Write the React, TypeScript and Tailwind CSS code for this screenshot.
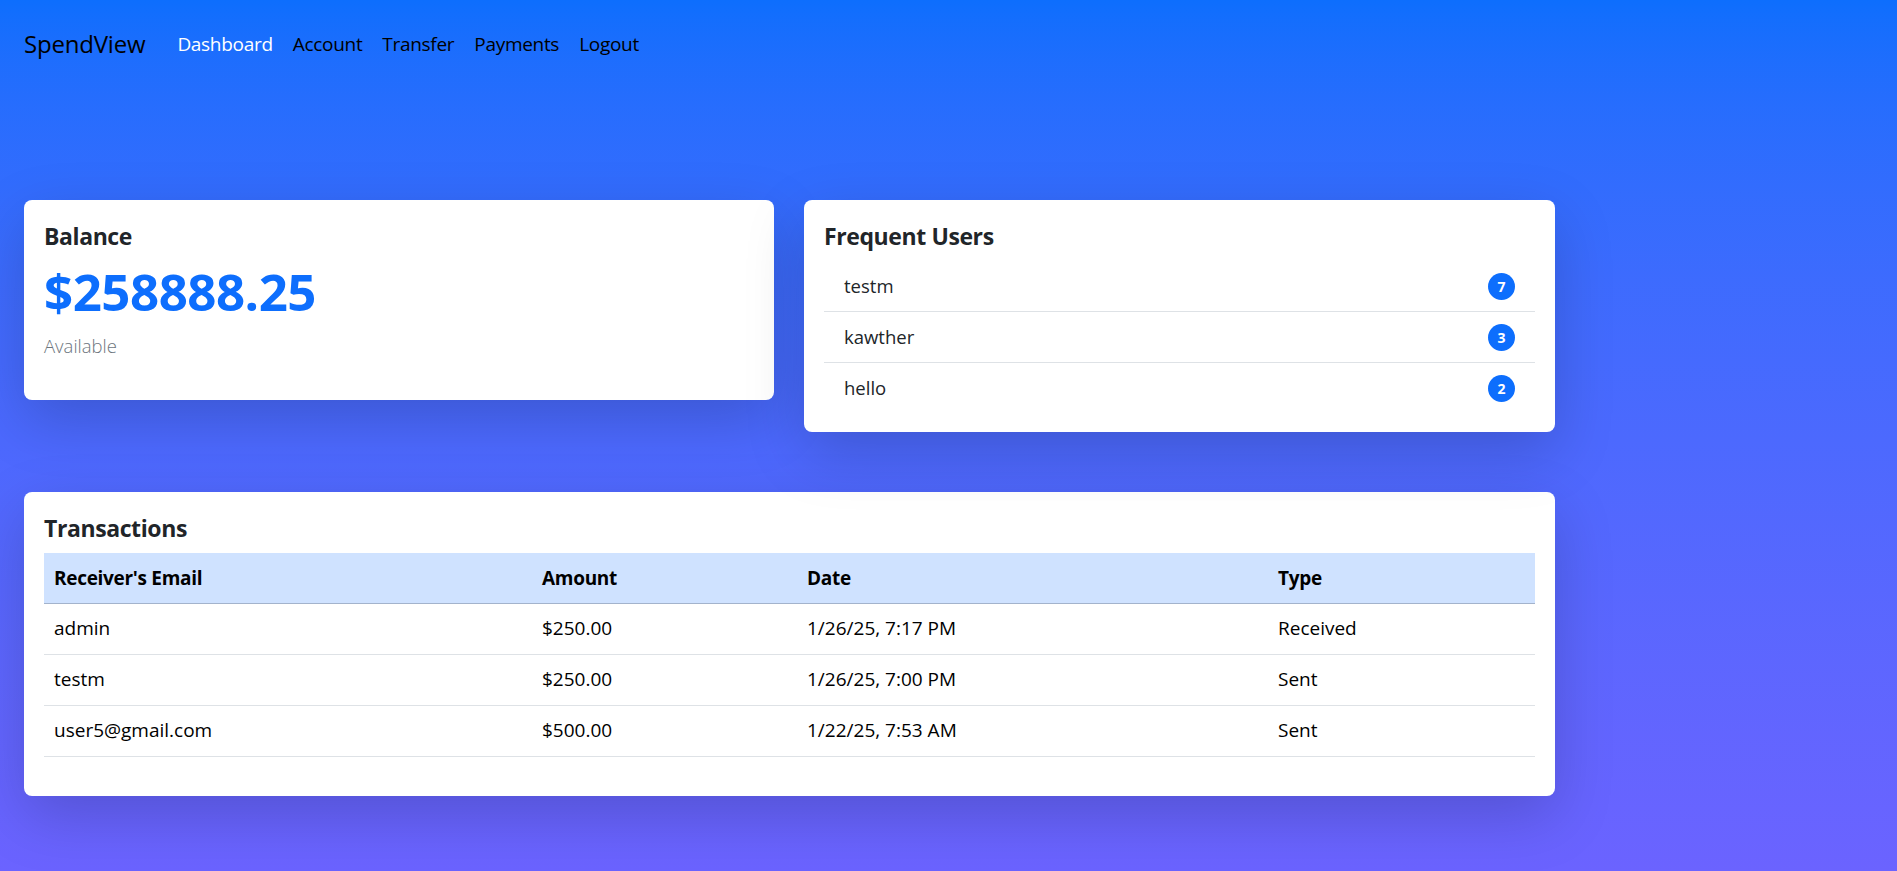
import React from "react";

const users = [
  { name: "testm", count: 7 },
  { name: "kawther", count: 3 },
  { name: "hello", count: 2 },
];

const txs = [
  { email: "admin", amount: "$250.00", date: "1/26/25, 7:17 PM", type: "Received" },
  { email: "testm", amount: "$250.00", date: "1/26/25, 7:00 PM", type: "Sent" },
  { email: "user5@gmail.com", amount: "$500.00", date: "1/22/25, 7:53 AM", type: "Sent" },
];

export default function App() {
  return (
    <div
      className="min-h-screen w-full bg-gradient-to-b from-[#0d6efd] to-[#6b63ff] text-[#212529]"
      style={{ fontFamily: '"Open Sans", "Noto Sans", sans-serif' }}
    >
      <nav className="flex h-[88px] items-center pl-[24px]">
        <span className="mr-[22px] text-[24px] leading-[30px] text-black tracking-[-0.2px]">SpendView</span>
        <ul className="flex items-center text-[19px] leading-[30px] tracking-[-0.3px]">
          <li className="px-[10px] text-white">Dashboard</li>
          <li className="px-[10px] text-black">Account</li>
          <li className="px-[10px] text-black">Transfer</li>
          <li className="px-[10px] text-black">Payments</li>
          <li className="px-[10px] text-black">Logout</li>
        </ul>
      </nav>

      <main className="px-[24px] pt-[112px] pb-[60px]">
        <div className="grid w-[1531px] grid-cols-[750px_751px] items-start gap-x-[30px]">
          <section className="rounded-[8px] bg-white px-[20px] pt-[21px] pb-[20px] shadow-[0_20px_60px_rgba(0,0,0,0.175)]">
            <h5 className="mb-[10px] text-[23px] font-bold leading-[30px] tracking-[-0.4px]">Balance</h5>
            <div className="mb-[10px] text-[51px] font-bold leading-[60px] tracking-[-0.5px] text-[#0d6efd]">$258888.25</div>
            <p className="mb-[19px] text-[18.5px] font-light leading-[30px] text-[#6c757d]">Available</p>
          </section>

          <section className="rounded-[8px] bg-white px-[20px] pt-[21px] pb-[19px] shadow-[0_20px_60px_rgba(0,0,0,0.175)]">
            <h5 className="mb-[10px] text-[23px] font-bold leading-[30px] tracking-[-0.4px]">Frequent Users</h5>
            <ul>
              {users.map((u, i) => (
                <li
                  key={u.name}
                  className={
                    "flex h-[50px] items-center justify-between px-[20px] text-[18.5px] " +
                    (i < users.length - 1 ? "border-b border-[#dee2e6] box-content" : "")
                  }
                >
                  <span>{u.name}</span>
                  <span className="flex h-[27px] min-w-[27px] items-center justify-center rounded-full bg-[#0d6efd] px-[8px] text-[14px] font-bold text-white">
                    {u.count}
                  </span>
                </li>
              ))}
            </ul>
          </section>
        </div>

        <section className="mt-[60px] w-[1531px] rounded-[8px] bg-white px-[20px] pt-[21px] pb-[20px] shadow-[0_20px_60px_rgba(0,0,0,0.175)]">
          <h5 className="mb-[10px] text-[23px] font-bold leading-[30px] tracking-[-0.4px]">Transactions</h5>
          <table className="mb-[19px] w-full border-collapse text-left text-[19px] text-black">
            <thead>
              <tr className="h-[50px] border-b border-[#a3b3cc] bg-[#cfe2ff]">
                <th className="w-[488px] px-[10px] font-bold tracking-[-0.3px]">Receiver's Email</th>
                <th className="w-[265px] px-[10px] font-bold tracking-[-0.3px]">Amount</th>
                <th className="w-[471px] px-[10px] font-bold tracking-[-0.3px]">Date</th>
                <th className="px-[10px] font-bold tracking-[-0.3px]">Type</th>
              </tr>
            </thead>
            <tbody>
              {txs.map((t, i) => (
                <tr key={i} className="h-[51px] border-b border-[#dee2e6]">
                  <td className="px-[10px]">{t.email}</td>
                  <td className="px-[10px]">{t.amount}</td>
                  <td className="px-[10px]">{t.date}</td>
                  <td className="px-[10px]">{t.type}</td>
                </tr>
              ))}
            </tbody>
          </table>
        </section>
      </main>
    </div>
  );
}
